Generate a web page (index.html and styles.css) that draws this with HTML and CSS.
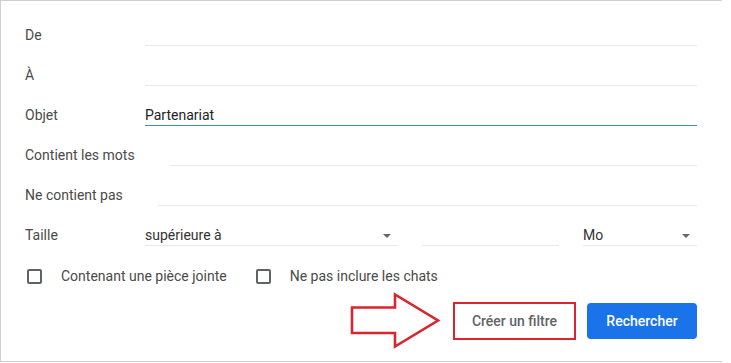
FILE: index.html
```html
<!DOCTYPE html>
<html lang="fr">
<head>
<meta charset="utf-8">
<title>Recherche</title>
<link rel="stylesheet" href="styles.css">
</head>
<body>
<div class="panel">
  <div class="row"><span class="label">De</span><div class="field"></div></div>
  <div class="row"><span class="label">À</span><div class="field"></div></div>
  <div class="row"><span class="label">Objet</span><div class="field field-active">Partenariat</div></div>
  <div class="row"><span class="label">Contient les mots</span><div class="field"></div></div>
  <div class="row"><span class="label">Ne contient pas</span><div class="field"></div></div>
  <div class="row">
    <span class="label">Taille</span>
    <div class="size">
      <div class="field select wide">supérieure à<span class="caret"></span></div>
      <div class="field num"></div>
      <div class="field select unit">Mo<span class="caret"></span></div>
    </div>
  </div>
  <div class="checks">
    <label class="check"><span class="box"></span>Contenant une pièce jointe</label>
    <label class="check"><span class="box"></span>Ne pas inclure les chats</label>
  </div>
  <div class="actions">
    <button class="btn filter">Créer un filtre</button>
    <button class="btn search">Rechercher</button>
  </div>
  <svg class="arrow" width="100" height="60" viewBox="350 292 100 60">
    <polygon points="352,307.5 395,307.5 395,294.5 438,320.5 395,346.5 395,333 352,333" fill="#fff" stroke="#d9252f" stroke-width="2.6"/>
  </svg>
</div>
</body>
</html>
```
FILE: styles.css
```css
html, body {
  margin: 0;
  padding: 0;
  background: #fff;
}
body {
  font-family: Roboto, "Liberation Sans", Arial, sans-serif;
  font-size: 14px;
  color: #222;
}
.panel {
  position: relative;
  box-sizing: border-box;
  width: 722px;
  height: 362px;
  border-top: 1px solid #cfcfcf;
  border-left: 1px solid #cfcfcf;
  border-bottom: 1px solid #cfcfcf;
  padding: 5px 25px 0 24px;
}
.row {
  display: flex;
  height: 40px;
  align-items: flex-end;
}
.label {
  flex: 0 0 auto;
  min-width: 85px;
  margin-right: 35px;
  line-height: 20px;
  padding-bottom: 1px;
  color: #4a4a4a;
}
.field {
  flex: 1 1 auto;
  height: 20px;
  line-height: 20px;
  border-bottom: 1px solid #e8e8e8;
  color: #222;
}
.field-active {
  border-bottom: 1px solid #3f8ed0;
}
.size {
  flex: 1 1 auto;
  display: flex;
  gap: 24px;
}
.select {
  position: relative;
  color: #333;
}
.wide { flex: 0 0 253px; }
.num { flex: 0 0 137px; }
.unit { flex: 0 0 114px; }
.caret {
  position: absolute;
  right: 7px;
  top: 9px;
  width: 0;
  height: 0;
  border-left: 4px solid transparent;
  border-right: 4px solid transparent;
  border-top: 4px solid #666;
}
.checks {
  display: flex;
  gap: 29px;
  margin-top: 20px;
  padding-left: 2px;
}
.check {
  display: flex;
  align-items: center;
  height: 20px;
  color: #4a4a4a;
}
.box {
  box-sizing: border-box;
  width: 15px;
  height: 15px;
  border: 2px solid #5f6368;
  border-radius: 2px;
  margin-right: 19px;
}
.actions {
  display: flex;
  justify-content: flex-end;
  align-items: center;
  gap: 11px;
  margin-top: 16px;
}
.btn {
  font-family: Roboto, "Liberation Sans", Arial, sans-serif;
  font-size: 14px;
  font-weight: 500;
  border-radius: 4px;
  cursor: pointer;
}
.filter {
  box-sizing: border-box;
  width: 123px;
  height: 38px;
  background: #fff;
  color: #5f6368;
  border: 2.5px solid #d9252f;
  border-radius: 0;
  padding: 0;
}
.search {
  width: 110px;
  height: 36px;
  background: #1a73e8;
  color: #fff;
  border: none;
}
.arrow {
  position: absolute;
  left: 349px;
  top: 291px;
}
```
